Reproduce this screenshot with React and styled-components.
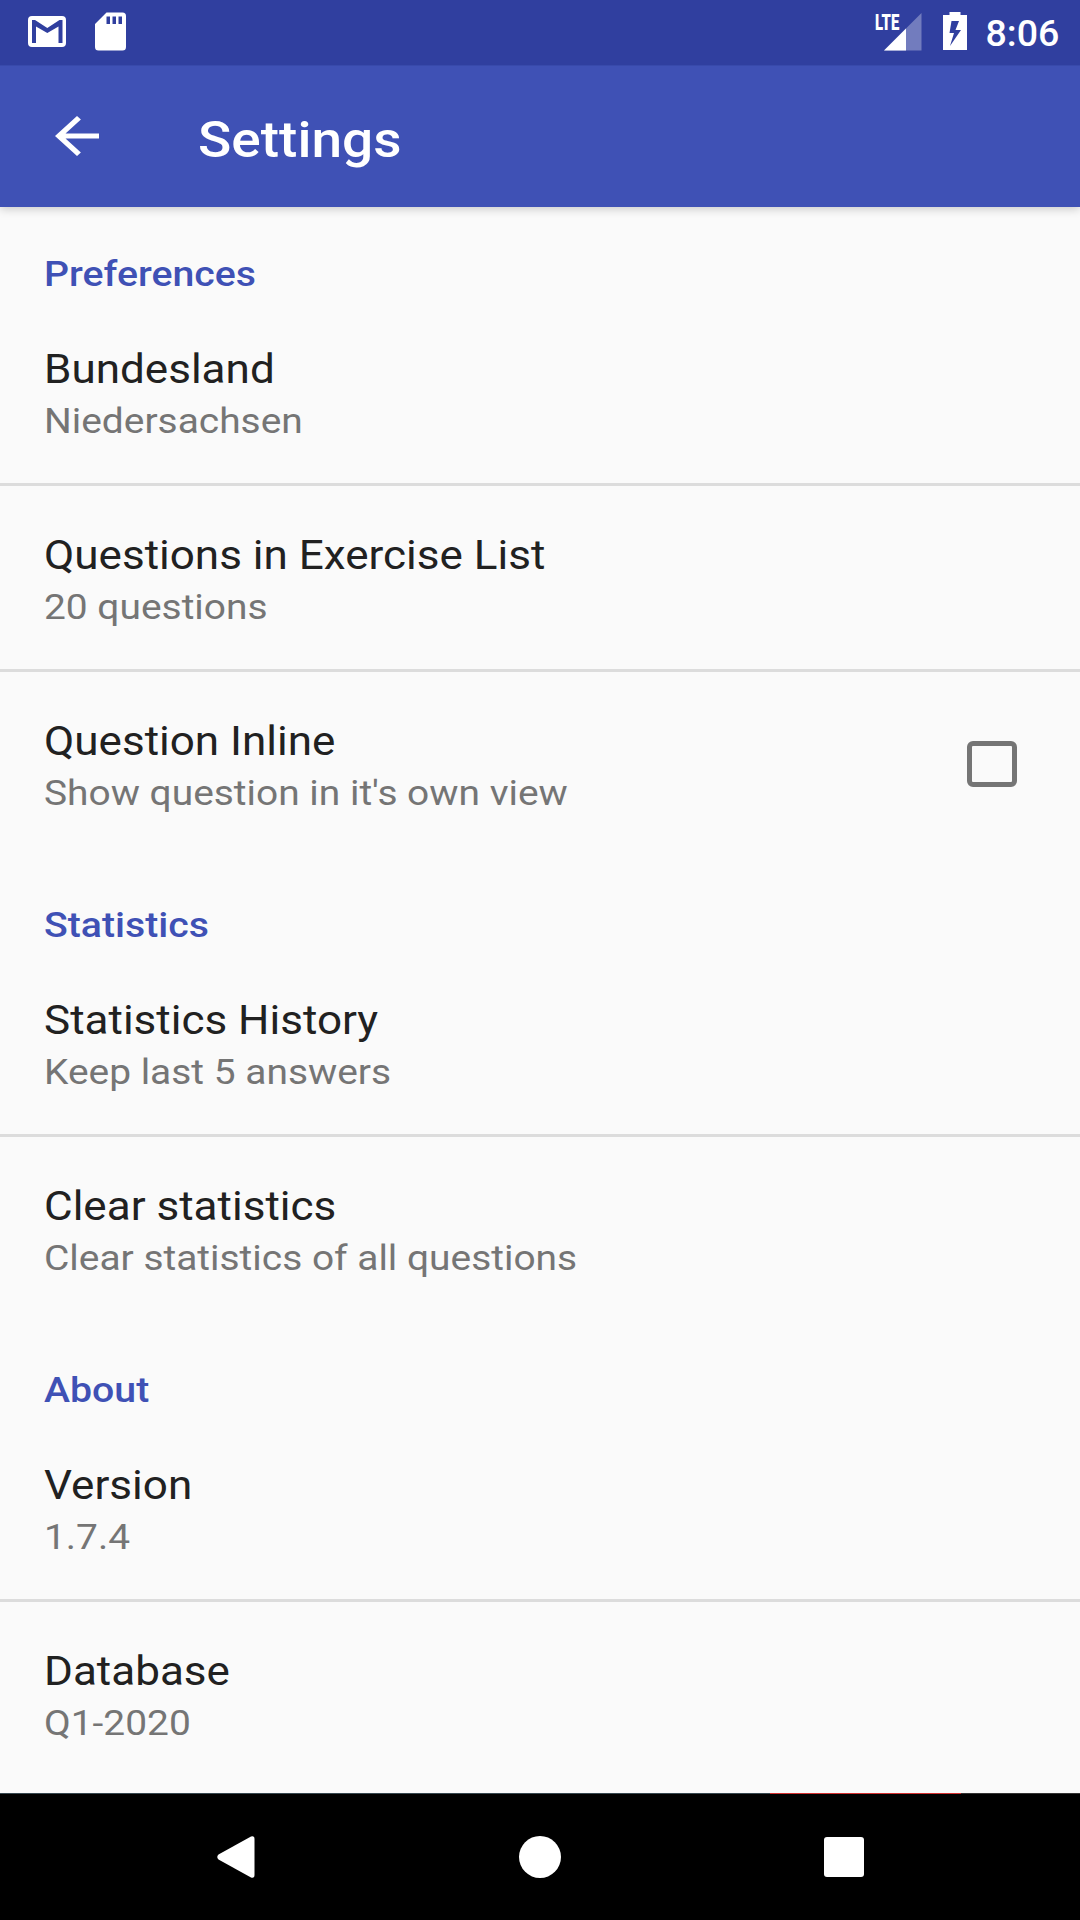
import React from 'react';
import styled, { createGlobalStyle } from 'styled-components';

const GlobalStyle = createGlobalStyle`
  * { box-sizing: border-box; }
  html, body { margin: 0; padding: 0; }
  body { font-family: Roboto, "Liberation Sans", sans-serif; background: #fafafa; }
`;

const Screen = styled.div`
  display: flex;
  flex-direction: column;
  width: 1080px;
  height: 1920px;
  overflow: hidden;
  background: #fafafa;
`;

const StatusBar = styled.header`
  display: flex;
  justify-content: space-between;
  flex: none;
  height: 65px;
  background: #303f9f;
  color: #fff;
  z-index: 2;
`;

const StatusGroup = styled.div`
  display: flex;
  align-items: flex-start;
`;

const StatusIcon = styled.svg`
  display: block;
  flex: none;
  margin-left: ${(p) => p.$gap}px;
  margin-top: ${(p) => p.$top}px;
`;

const NetworkType = styled.span`
  width: 9px;
  margin-top: 9px;
  font-size: 22.5px;
  font-weight: 900;
  line-height: 26px;
  transform: scaleX(0.66);
  transform-origin: left;
  white-space: nowrap;
`;

const Clock = styled.time`
  width: 113.5px;
  margin-top: 11px;
  padding-left: 19px;
  font-size: 37.5px;
  font-weight: 500;
  line-height: 44px;
`;

const AppBar = styled.div`
  display: flex;
  flex: none;
  height: 142px;
  padding: 40px 0 0 44px;
  border-top: 1px solid #384aab;
  background: #3f51b5;
  color: #fff;
  box-shadow: 0 2px 9px rgba(0, 0, 0, 0.2);
  z-index: 1;
`;

const BackButton = styled.button`
  width: 154.4px;
  height: 60px;
  padding: 0;
  border: 0;
  background: none;
  color: inherit;
  svg { display: block; }
`;

const PageTitle = styled.h1`
  margin: 1px 0 0;
  font-size: 50px;
  font-weight: 500;
  line-height: 66px;
  transform: scaleX(1.1);
  transform-origin: left;
`;

const Content = styled.main`
  flex: 1;
  min-height: 0;
  overflow: hidden;
`;

const SectionTitle = styled.h2`
  height: 93px;
  margin: 0;
  padding: 45px 0 0 43.7px;
  color: #3f51b5;
  font-size: 35.8px;
  font-weight: 500;
  line-height: 44px;
  span { display: inline-block; transform: scaleX(1.096); transform-origin: left; }
`;

const Item = styled.div`
  display: flex;
  justify-content: space-between;
  height: 186px;
  padding: 43px 63px 0 43.7px;
  border-bottom: ${(p) => (p.$last ? 0 : '3px solid #dcdcdc')};
`;

const ItemText = styled.div`
  transform: scaleX(1.09);
  transform-origin: left;
  white-space: nowrap;
`;

const ItemTitle = styled.div`
  color: #212121;
  font-size: 40.4px;
  line-height: 54px;
`;

const ItemSummary = styled.div`
  color: #757575;
  font-size: 35.7px;
  line-height: 48px;
`;

const Checkbox = styled.div`
  width: 50px;
  height: 46px;
  margin-top: 26px;
  border: 5px solid #757575;
  border-radius: 6px;
`;

const NavBar = styled.nav`
  display: flex;
  flex: none;
  justify-content: center;
  align-items: center;
  gap: 262px;
  height: 126px;
  background: #000;
  svg { display: block; }
`;

const NextRow = styled.div`
  display: flex;
  flex: none;
  height: 1px;
  background: #333;
`;

const NextRowPart = styled.div`
  width: ${(p) => p.$width}px;
  background: ${(p) => p.$color};
`;

const SECTIONS = [
  { title: 'Preferences', items: [
    { title: 'Bundesland', summary: 'Niedersachsen' },
    { title: 'Questions in Exercise List', summary: '20 questions' },
    { title: 'Question Inline', summary: "Show question in it's own view", checkbox: true },
  ] },
  { title: 'Statistics', items: [
    { title: 'Statistics History', summary: 'Keep last 5 answers' },
    { title: 'Clear statistics', summary: 'Clear statistics of all questions' },
  ] },
  { title: 'About', items: [
    { title: 'Version', summary: '1.7.4' },
    { title: 'Database', summary: 'Q1-2020' },
  ] },
];

function GmailIcon() {
  return (
    <StatusIcon $gap={28} $top={16} width="38" height="31" viewBox="0 0 38 31" fill="#fff">
      <path fillRule="evenodd" d="M4 0H34Q38 0 38 4V27Q38 31 34 31H4Q0 31 0 27V4Q0 0 4 0ZM4 4V27H8V10.500L19.300 17L30.500 10.500V27H34.500V4H31.500L19.300 12L7 4Z" />
    </StatusIcon>
  );
}

function SdCardIcon() {
  return (
    <StatusIcon $gap={29} $top={12} width="31" height="39" viewBox="0 0 31 39" fill="#fff">
      <path fillRule="evenodd" d="M11.500 .5H27.500Q31 .5 31 4V35Q31 38.500 27.500 38.500H3.500Q0 38.500 0 35V12ZM11.500 4.500V12H15V4.500ZM17.500 4.500V12H21V4.500ZM23.500 4.500V12H27V4.500Z" />
    </StatusIcon>
  );
}

export default function App() {
  return (
    <Screen>
      <GlobalStyle />
      <StatusBar>
        <StatusGroup><GmailIcon /><SdCardIcon /></StatusGroup>
        <StatusGroup>
          <NetworkType>LTE</NetworkType>
          <StatusIcon $gap={0} $top={13} width="38" height="38" viewBox="0 0 38 38" fill="#fff">
            <path d="M37.500 0V37.500H0Z" opacity=".32" />
            <path d="M22 15.500V37.500H0Z" />
          </StatusIcon>
          <StatusIcon $gap={21} $top={12} width="24" height="38" viewBox="0 0 24 38" fill="#fff">
            <path fillRule="evenodd" d="M6.500 0H17.500V3H24V38H0V3H6.500ZM8.500 9L6.500 21H11L7 34L18 18H12.500L16 9Z" />
          </StatusIcon>
          <Clock>8:06</Clock>
        </StatusGroup>
      </StatusBar>
      <AppBar>
        <BackButton aria-label="Back">
          <svg width="66" height="60" viewBox="0 0 24 24" preserveAspectRatio="none" fill="#fff">
            <path d="M20 11H7.830l5.590-5.590L12 4l-8 8 8 8 1.410-1.410L7.830 13H20z" />
          </svg>
        </BackButton>
        <PageTitle>Settings</PageTitle>
      </AppBar>
      <Content>
        {SECTIONS.map((s) => (
          <section key={s.title}>
            <SectionTitle><span>{s.title}</span></SectionTitle>
            {s.items.map((it, i) => (
              <Item key={it.title} $last={i === s.items.length - 1}>
                <ItemText>
                  <ItemTitle>{it.title}</ItemTitle>
                  <ItemSummary>{it.summary}</ItemSummary>
                </ItemText>
                {it.checkbox && <Checkbox role="checkbox" aria-checked="false" />}
              </Item>
            ))}
          </section>
        ))}
      </Content>
      <NextRow>
        <NextRowPart $width={770} $color="#37474f" />
        <NextRowPart $width={191} $color="#d32f2f" />
      </NextRow>
      <NavBar>
        <svg width="42" height="44" viewBox="0 0 42 44" fill="#fff">
          <path d="M36 1.500Q39.500 .5 39.500 4V40Q39.500 43.500 36 42.500L3.500 24.500Q1 22 3.500 19.500Z" />
        </svg>
        <svg width="42" height="42" viewBox="0 0 42 42" fill="#fff"><circle cx="21" cy="21" r="21" /></svg>
        <svg width="42" height="42" viewBox="0 0 42 42" fill="#fff"><rect x="1" y="1" width="40" height="40" rx="3" /></svg>
      </NavBar>
    </Screen>
  );
}
